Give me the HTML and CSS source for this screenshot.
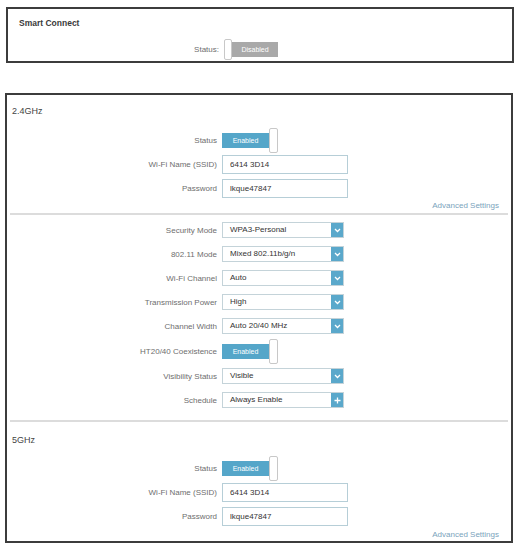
FILE: index.html
```html
<!DOCTYPE html>
<html lang="en">
<head>
  <meta charset="UTF-8" />
  <title>Wireless Settings</title>
  <link rel="stylesheet" href="styles.css">
</head>
<body>
  <div class="page">
    <div class="panel smart">
      <div class="panel-title">Smart Connect</div>
      <div class="row">
        <span class="label">Status:</span>
        <div class="toggle off"><span class="knob"></span><span class="bar">Disabled</span></div>
      </div>
    </div>

    <div class="panel bands">
      <section class="band">
        <h2>2.4GHz</h2>
        <div class="row">
          <span class="label">Status</span>
          <div class="toggle on"><span class="bar">Enabled</span><span class="knob"></span></div>
        </div>
        <div class="row">
          <span class="label">Wi-Fi Name (SSID)</span>
          <input class="field" type="text" value="6414 3D14">
        </div>
        <div class="row">
          <span class="label">Password</span>
          <input class="field" type="text" value="lkque47847">
        </div>
        <a class="advanced">Advanced Settings</a>
      </section>

      <div class="divider"></div>

      <section class="settings">
        <div class="row">
          <span class="label">Security Mode</span>
          <div class="select"><span class="value">WPA3-Personal</span><span class="btn"><svg width="7" height="5" viewBox="0 0 7 5"><path d="M1 1l2.5 2.5L6 1" /></svg></span></div>
        </div>
        <div class="row">
          <span class="label">802.11 Mode</span>
          <div class="select"><span class="value">Mixed 802.11b/g/n</span><span class="btn"><svg width="7" height="5" viewBox="0 0 7 5"><path d="M1 1l2.5 2.5L6 1" /></svg></span></div>
        </div>
        <div class="row">
          <span class="label">Wi-Fi Channel</span>
          <div class="select"><span class="value">Auto</span><span class="btn"><svg width="7" height="5" viewBox="0 0 7 5"><path d="M1 1l2.5 2.5L6 1" /></svg></span></div>
        </div>
        <div class="row">
          <span class="label">Transmission Power</span>
          <div class="select"><span class="value">High</span><span class="btn"><svg width="7" height="5" viewBox="0 0 7 5"><path d="M1 1l2.5 2.5L6 1" /></svg></span></div>
        </div>
        <div class="row">
          <span class="label">Channel Width</span>
          <div class="select"><span class="value">Auto 20/40 MHz</span><span class="btn"><svg width="7" height="5" viewBox="0 0 7 5"><path d="M1 1l2.5 2.5L6 1" /></svg></span></div>
        </div>
        <div class="row tall">
          <span class="label">HT20/40 Coexistence</span>
          <div class="toggle on"><span class="bar">Enabled</span><span class="knob"></span></div>
        </div>
        <div class="row">
          <span class="label">Visibility Status</span>
          <div class="select"><span class="value">Visible</span><span class="btn"><svg width="7" height="5" viewBox="0 0 7 5"><path d="M1 1l2.5 2.5L6 1" /></svg></span></div>
        </div>
        <div class="row">
          <span class="label">Schedule</span>
          <div class="select"><span class="value">Always Enable</span><span class="btn"><svg width="7" height="7" viewBox="0 0 7 7"><path d="M3.5 0.5v6M0.5 3.5h6" /></svg></span></div>
        </div>
      </section>

      <div class="divider"></div>

      <section class="band five">
        <h2>5GHz</h2>
        <div class="row">
          <span class="label">Status</span>
          <div class="toggle on"><span class="bar">Enabled</span><span class="knob"></span></div>
        </div>
        <div class="row">
          <span class="label">Wi-Fi Name (SSID)</span>
          <input class="field" type="text" value="6414 3D14">
        </div>
        <div class="row">
          <span class="label">Password</span>
          <input class="field" type="text" value="lkque47847">
        </div>
        <a class="advanced">Advanced Settings</a>
      </section>
    </div>
  </div>
</body>
</html>
```

FILE: styles.css
```css
body {
  margin: 0;
  font-family: 'Liberation Sans', Arial, sans-serif;
  background-color: #fff;
  color: #6b6b6b;
}
.page {
  padding: 7px 0 0 6px;
}
.panel {
  width: 508px;
  box-sizing: border-box;
  border: 2px solid #3c3c3c;
}
.smart {
  padding: 8px 0 0 0;
}
.panel-title {
  padding-left: 11px;
  height: 12px;
  line-height: 12px;
  font-size: 8.5px;
  font-weight: bold;
  color: #3a3a3a;
  margin-bottom: 8px;
}
.smart .row {
  grid-template-columns: 211px auto;
}
.bands {
  margin: 30px 0 0 -1px;
}
h2 {
  margin: 0;
  padding-left: 5px;
  height: 16px;
  line-height: 16px;
  font-size: 9px;
  font-weight: normal;
  color: #444;
}
.band {
  padding-top: 8px;
}
.band h2 {
  margin-bottom: 9px;
}
.band.five {
  padding-top: 10px;
}
.band.five h2 {
  margin-bottom: 8px;
}
.row {
  display: grid;
  grid-template-columns: 210px auto;
  column-gap: 5px;
  align-items: center;
  height: 24px;
}
.row.tall {
  height: 26px;
}
.label {
  text-align: right;
  font-size: 8px;
  color: #6e6e6e;
}
.toggle {
  display: flex;
  align-items: center;
}
.toggle .bar {
  height: 15px;
  line-height: 15px;
  text-align: center;
  font-size: 7px;
  color: #fff;
}
.toggle .knob {
  box-sizing: border-box;
  background: #fff;
  border: 1px solid #c8c8c8;
  border-radius: 2px;
}
.toggle.on .bar {
  width: 47px;
  background-color: #55a6c9;
}
.toggle.on .knob {
  width: 9px;
  height: 25px;
}
.toggle.off .bar {
  width: 46px;
  background-color: #a9a9a9;
}
.toggle.off .knob {
  width: 8px;
  height: 21px;
}
.field {
  width: 126px;
  height: 19px;
  box-sizing: border-box;
  margin: 0;
  padding: 0 7px;
  border: 1px solid #b6ced7;
  font-family: 'Liberation Sans', Arial, sans-serif;
  font-size: 8px;
  color: #333;
  outline: none;
}
.select {
  display: flex;
  width: 122px;
  height: 16px;
  box-sizing: border-box;
  border: 1px solid #c4d3d9;
}
.select .value {
  flex: 1;
  padding-left: 7px;
  line-height: 14px;
  font-size: 8px;
  color: #333;
}
.select .btn {
  width: 12px;
  display: flex;
  align-items: center;
  justify-content: center;
  background-color: #5aa8cb;
}
.select .btn path {
  fill: none;
  stroke: #fff;
  stroke-width: 1.3;
}
.advanced {
  display: block;
  height: 12px;
  line-height: 12px;
  padding-right: 12px;
  text-align: right;
  font-size: 8px;
  color: #7aa3bc;
}
.band .advanced {
  margin-top: 0;
}
.band.five .advanced {
  margin-top: 1px;
}
.divider {
  height: 2px;
  margin: 1px 3px 0 3px;
  background-color: #dcdcdc;
}
.settings {
  padding: 3px 0 8px 0;
}
.settings + .divider {
  margin-top: 0;
}
```
